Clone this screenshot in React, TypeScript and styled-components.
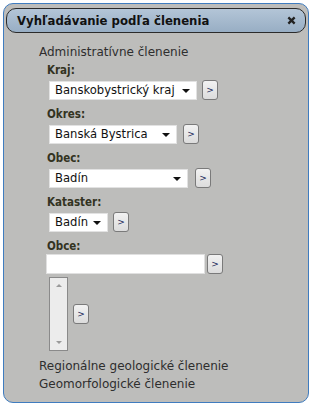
import React from "react";
import styled, { createGlobalStyle } from "styled-components";

const GlobalStyle = createGlobalStyle`
  html, body {
    margin: 0;
    padding: 0;
    background: #ffffff;
  }
  body {
    font-family: "DejaVu Sans", sans-serif;
  }
`;

const Page = styled.div`
  width: 311px;
  height: 406px;
  padding: 3px 2px 3px 3px;
  box-sizing: border-box;
`;

const Panel = styled.div`
  height: 400px;
  box-sizing: border-box;
  background: #bdbdbb;
  border: 1px solid #3f7cbf;
  border-radius: 10px;
  padding: 4px 2px 0 2px;
  overflow: hidden;
`;

const Header = styled.div`
  height: 25px;
  box-sizing: border-box;
  border: 1px solid #2b2b2b;
  border-radius: 10px;
  background: linear-gradient(#b3c5d7, #98aec4);
  display: flex;
  align-items: center;
  justify-content: space-between;
  padding: 0 9px 0 10px;
`;

const Title = styled.div`
  font-family: "DejaVu Sans Condensed", "DejaVu Sans", sans-serif;
  font-size: 13px;
  font-weight: bold;
  color: #111;
`;

const CloseIcon = styled.svg`
  width: 9px;
  height: 9px;
  cursor: pointer;
`;

const Body = styled.div`
  padding: 10px 0 0 33px;
  color: #2a2a2a;
`;

const SectionTitle = styled.div`
  font-size: 12px;
  line-height: 18px;
  color: #2e2e2e;
`;

const Fields = styled.div`
  padding-left: 8px;
`;

const Label = styled.div`
  font-family: "DejaVu Sans Condensed", "DejaVu Sans", sans-serif;
  font-size: 11.5px;
  font-weight: bold;
  color: #333322;
  line-height: 14px;
  margin-top: 2px;
`;

const Row = styled.div<{ $gap?: number; $mt?: number; $mb?: number }>`
  display: flex;
  align-items: center;
  gap: ${(p) => p.$gap ?? 5}px;
  margin: ${(p) => p.$mt ?? 3}px 0 ${(p) => p.$mb ?? 7}px 2px;
`;

const Select = styled.div<{ $width: number }>`
  width: ${(p) => p.$width}px;
  height: 19px;
  box-sizing: border-box;
  background: #ffffff;
  border: 1px solid #e2e2e2;
  display: flex;
  align-items: center;
  justify-content: space-between;
  padding: 0 6px 0 5px;
  font-size: 11.6px;
  color: #111;
  white-space: nowrap;
`;

const Arrow = styled.span`
  flex-shrink: 0;
  width: 0;
  height: 0;
  border-left: 4px solid transparent;
  border-right: 4px solid transparent;
  border-top: 4px solid #111;
  margin-top: 2px;
`;

const TextInput = styled.input`
  width: 159px;
  height: 20px;
  box-sizing: border-box;
  border: 1px solid #e0e0e0;
  background: #ffffff;
  outline: none;
  margin-left: -3px;
`;

const GoButton = styled.button`
  width: 16px;
  height: 20px;
  padding: 0;
  box-sizing: border-box;
  border: 1px solid #7a7a7a;
  border-radius: 3px;
  background: linear-gradient(#f2f2f2, #dcdcdc);
  font-family: "DejaVu Sans", sans-serif;
  font-size: 9px;
  color: #1a2a5a;
  display: flex;
  align-items: center;
  justify-content: center;
`;

const ListBox = styled.div`
  width: 19px;
  height: 74px;
  box-sizing: border-box;
  border: 1px solid #8a8a8a;
  background: #ececec;
  display: flex;
  flex-direction: column;
  justify-content: space-between;
  align-items: center;
  padding: 6px 0;
`;

const ListArrow = styled.span<{ $up?: boolean }>`
  width: 0;
  height: 0;
  border-left: 3px solid transparent;
  border-right: 3px solid transparent;
  ${(p) =>
    p.$up ? "border-bottom: 3px solid #9a9a9a;" : "border-top: 3px solid #9a9a9a;"}
`;

const Links = styled.div``;

const LinkItem = styled.div`
  font-size: 12px;
  line-height: 18px;
  color: #2e2e2e;
  cursor: pointer;
`;

type SelectField = { label: string; value: string; width: number; gap?: number };

const selects: SelectField[] = [
  { label: "Kraj:", value: "Banskobystrický kraj", width: 148 },
  { label: "Okres:", value: "Banská Bystrica", width: 128, gap: 6 },
  { label: "Obec:", value: "Badín", width: 139, gap: 7 },
  { label: "Kataster:", value: "Badín", width: 59 },
];

export default function App() {
  return (
    <Page>
      <GlobalStyle />
      <Panel>
        <Header>
          <Title>Vyhľadávanie podľa členenia</Title>
          <CloseIcon viewBox="0 0 10 10">
            <path d="M1.5 1.5 L8.5 8.5 M8.5 1.5 L1.5 8.5" stroke="#222" strokeWidth="2.6" />
          </CloseIcon>
        </Header>
        <Body>
          <SectionTitle>Administratívne členenie</SectionTitle>
          <Fields>
            {selects.map((s) => (
              <div key={s.label}>
                <Label>{s.label}</Label>
                <Row $gap={s.gap}>
                  <Select $width={s.width}>
                    <span>{s.value}</span>
                    <Arrow />
                  </Select>
                  <GoButton>&gt;</GoButton>
                </Row>
              </div>
            ))}
            <Label>Obce:</Label>
            <Row $gap={2} $mt={1} $mb={3}>
              <TextInput type="text" />
              <GoButton>&gt;</GoButton>
            </Row>
            <Row $mt={0} $mb={6}>
              <ListBox>
                <ListArrow $up />
                <ListArrow />
              </ListBox>
              <GoButton>&gt;</GoButton>
            </Row>
          </Fields>
          <Links>
            <LinkItem>Regionálne geologické členenie</LinkItem>
            <LinkItem>Geomorfologické členenie</LinkItem>
          </Links>
        </Body>
      </Panel>
    </Page>
  );
}
